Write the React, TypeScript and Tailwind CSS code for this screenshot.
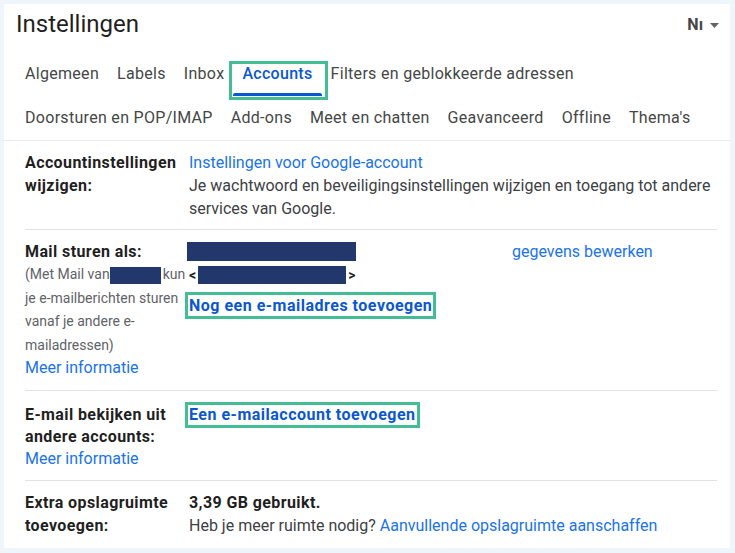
import React from "react";

const F = { fontFamily: "Roboto, 'Noto Sans', sans-serif" };

function Redact({ w, h, cls = "" }: { w: number; h: number; cls?: string }) {
  return <span className={"inline-block bg-[#22376b] align-middle " + cls} style={{ width: w, height: h }} />;
}

export default function App() {
  const tabs1 = ["Algemeen", "Labels", "Inbox", "Accounts", "Filters en geblokkeerde adressen"];
  const tabs2 = ["Doorsturen en POP/IMAP", "Add-ons", "Meet en chatten", "Geavanceerd", "Offline", "Thema's"];
  return (
    <div className="w-[735px] h-[553px] bg-[#eef5fb] pt-[4px] pl-[4px] pr-[5px] pb-[5px]" style={F}>
      <div className="bg-white w-full h-full flex flex-col text-[#1f1f1f]">
        {/* header */}
        <div className="h-[48px] flex items-start justify-between pl-[12px] pr-[11px] pt-[5px]">
          <div className="text-[24px] leading-[30px] text-[#1f1f1f]">Instellingen</div>
          <div className="flex items-center gap-[7px] pt-[6px] text-[#444746]">
            <span className="text-[16px] font-bold leading-[20px]">Nı</span>
            <svg width="9" height="5" viewBox="0 0 9 5"><path d="M0 0h9L4.5 5z" fill="#5f6368" /></svg>
          </div>
        </div>
        {/* tabs */}
        <div className="pl-[12px] flex h-[44px] text-[16px] tracking-[0.3px] text-[#444746]">
          {tabs1.map((t) =>
            t === "Accounts" ? (
              <div key={t} className="relative h-full px-[9px] flex items-center">
                <span className="text-[#0b57d0] font-medium">{t}</span>
                <span className="absolute left-0 right-0 bottom-0 h-[3px] bg-[#0b57d0] rounded-t-[2px]" />
                <span className="absolute -left-[4px] -right-[6px] top-[9px] -bottom-[4px] border-[3px] border-[#43be94]" />
              </div>
            ) : (
              <div key={t} className="h-full px-[9px] flex items-center">{t}</div>
            )
          )}
        </div>
        <div className="pl-[12px] flex h-[44px] text-[16px] tracking-[0.3px] text-[#444746]">
          {tabs2.map((t) => (
            <div key={t} className="h-full px-[9px] flex items-center">{t}</div>
          ))}
        </div>
        <div className="h-px bg-[#e8eaed]" />
        {/* content */}
        <div className="pl-[21px] pr-[13px] text-[16px]">
          {/* row 1 */}
          <div className="grid grid-cols-[164px_1fr] pt-[10px] pb-[9px] border-b border-[#e3e3e3] leading-[23px]">
            <div className="font-bold tracking-[0.4px]">Accountinstellingen wijzigen:</div>
            <div>
              <div className="text-[#1a73e8]">Instellingen voor Google-account</div>
              <div className="text-[#3c4043]">Je wachtwoord en beveiligingsinstellingen wijzigen en toegang tot andere services van Google.</div>
            </div>
          </div>
          {/* row 2 */}
          <div className="grid grid-cols-[164px_1fr] pt-[10px] pb-[11px] border-b border-[#e3e3e3]">
            <div>
              <div className="font-bold tracking-[0.4px] leading-[23px]">Mail sturen als:</div>
              <div className="text-[14px] leading-[23.5px] text-[#5f6368] -mr-[4px]">
                (Met Mail van<Redact w={51} h={17} cls="mr-[2px]" />kun je e-mailberichten sturen vanaf je andere e-mailadressen)
              </div>
              <div className="text-[#1a73e8] leading-[22px]">Meer informatie</div>
            </div>
            <div className="flex">
              <div className="w-[323px]">
                <div className="h-[23px] flex items-center -ml-[2px]"><Redact w={169} h={19} /></div>
                <div className="h-[24px] flex items-center font-bold text-[14px]">
                  &lt;<Redact w={148} h={18} cls="ml-[2px] mr-[2px]" />&gt;
                </div>
                <div className="mt-[5px] -ml-[4px] inline-block border-[3px] border-[#43be94] px-[1px] leading-[21px] font-bold tracking-[0.5px] text-[#0b57d0]">
                  Nog een e-mailadres toevoegen
                </div>
              </div>
              <div className="text-[#1a73e8] leading-[23px]">gegevens bewerken</div>
            </div>
          </div>
          {/* row 3 */}
          <div className="grid grid-cols-[164px_1fr] pt-[13px] pb-[10px] border-b border-[#e3e3e3] leading-[22px]">
            <div>
              <div className="font-bold tracking-[0.4px]">E-mail bekijken uit andere accounts:</div>
              <div className="text-[#1a73e8]">Meer informatie</div>
            </div>
            <div>
              <div className="-mt-[5px] -ml-[4px] inline-block border-[3px] border-[#43be94] px-[1px] leading-[20px] font-bold tracking-[0.5px] text-[#0b57d0]">
                Een e-mailaccount toevoegen
              </div>
            </div>
          </div>
          {/* row 4 */}
          <div className="grid grid-cols-[164px_1fr] pt-[10px] leading-[23px]">
            <div className="font-bold tracking-[0.4px]">Extra opslagruimte toevoegen:</div>
            <div>
              <div className="font-bold tracking-[0.4px]">3,39 GB gebruikt.</div>
              <div className="text-[#3c4043]">
                Heb je meer ruimte nodig? <span className="text-[#1a73e8]">Aanvullende opslagruimte aanschaffen</span>
              </div>
            </div>
          </div>
        </div>
      </div>
    </div>
  );
}
